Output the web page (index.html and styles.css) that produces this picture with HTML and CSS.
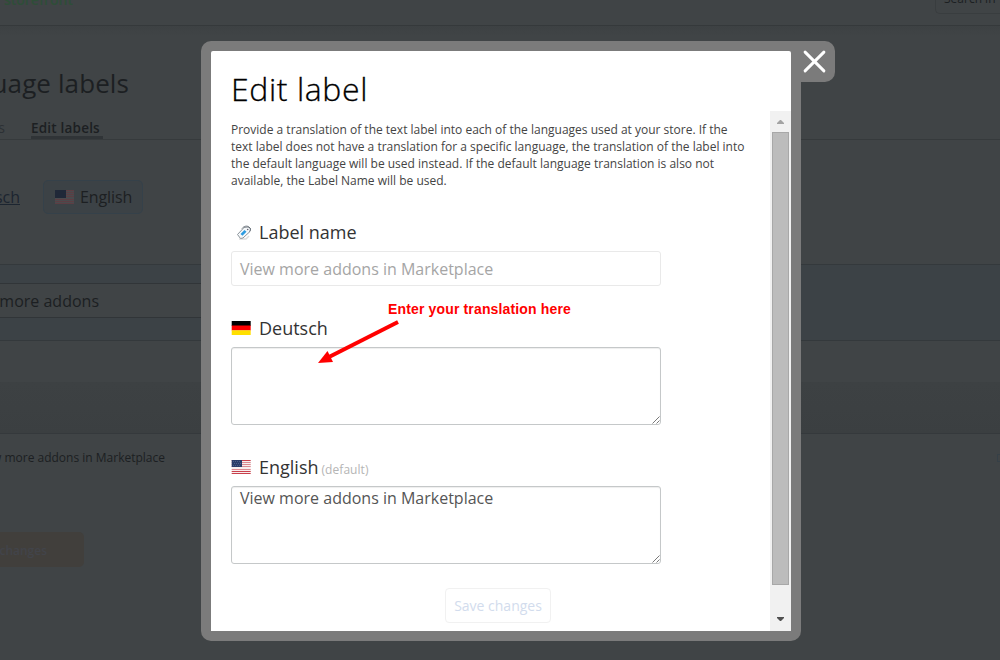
FILE: index.html
```html
<!DOCTYPE html>
<html lang="en">
<head>
<meta charset="utf-8">
<title>Language labels</title>
<link rel="stylesheet" href="styles.css">
</head>
<body>
<div class="page">
  <header class="topbar">
    <span class="clip store">storefront</span>
    <span class="search">Search in</span>
  </header>
  <section class="heading">
    <h1 class="clip title">Language labels</h1>
    <nav class="tabs"><span class="clip tab-prev">Languages</span><span class="tab-active">Edit labels</span></nav>
  </section>
  <section class="langs">
    <span class="clip lang-link">Deutsch</span>
    <span class="lang-current">
      <svg class="flag" viewBox="0 0 19 14"><path fill="#4b4a4d" d="M0 0h19v14H0z"/><path stroke="#5b3e44" d="M0 .5h19M0 2.500h19M0 4.500h19M0 6.500h19M0 9.500h19M0 11.500h19M0 13.500h19"/><path fill="#202838" d="M0 0h11v8H0z"/></svg>
      <span class="lang-name">English</span>
    </span>
  </section>
  <section class="filter"><div class="filter-input"><span class="clip filter-text">View more addons</span></div></section>
  <section class="gap"></section>
  <section class="thead"></section>
  <section class="results">
    <div class="row"><span class="clip row-text">View more addons in Marketplace</span><span class="row-box"></span></div>
    <div class="save-bg"><span class="clip save-bg-text">Save changes</span></div>
  </section>
</div>

<div class="modal">
  <div class="dialog">
    <h2 class="dialog-title">Edit label</h2>
    <div class="body">
      <div class="content">
        <p class="intro">Provide a translation of the text label into each of the languages used at your store. If the<br>text label does not have a translation for a specific language, the translation of the label into<br>the default language will be used instead. If the default language translation is also not<br>available, the Label Name will be used.</p>
        <div class="field">
          <div class="label">
            <svg class="icon" viewBox="0 0 20 18"><path d="M8 16h7l3-3" fill="none" stroke="#ddd" stroke-width="1.500"/><path d="M6.500 11.500 13 4.500l4-.5 2.500 1.500-.5 3-7 6.500-2.500.5z" fill="#f5f8fa" stroke="#8a9299"/><path d="m9.500 11 4-4 2 1.700-4 4z" fill="#2b9be0"/><path d="M11 5.500c2-2.500 5-3 7-1.500s2 3 .5 4.500" fill="none" stroke="#687078"/><circle cx="16.700" cy="6.500" r=".8" fill="#667"/></svg>
            <span class="label-text">Label name</span>
          </div>
          <div class="input">View more addons in Marketplace</div>
        </div>
        <div class="field second">
          <div class="label">
            <svg class="icon" viewBox="0 0 20 18"><path d="M.7 2h19v5H.7z"/><path fill="#f00" d="M.7 6.500h19v5H.7z"/><path fill="#ffe000" d="M.7 11.300h19V16H.7z"/></svg>
            <span class="label-text">Deutsch</span>
          </div>
          <div class="area"><svg class="grip" viewBox="0 0 8 8"><path d="m.5 7.500 7-7M4.500 7.500l3-3"/></svg></div>
        </div>
        <div class="field third">
          <div class="label">
            <svg class="icon" viewBox="0 0 20 18"><path fill="#f7eeee" d="M.7 2h19v14H.7z"/><path stroke="#c9404c" d="M.7 2.500h19M.7 15.500h19M.7 13.500h19"/><path stroke="#dc8a91" d="M.7 4.500h19M.7 6.500h19M.7 8.500h19M.7 11.500h19"/><path fill="#2b3d69" d="M.7 2h10.300v7H.7z"/><path stroke="#4d5d86" stroke-dasharray="1 1" d="M2 3.500h8M3 5.500h8M2 7.500h8"/></svg>
            <span class="label-text">English</span><span class="default">(default)</span>
          </div>
          <div class="area">View more addons in Marketplace<svg class="grip" viewBox="0 0 8 8"><path d="m.5 7.500 7-7M4.500 7.500l3-3"/></svg></div>
        </div>
        <div class="actions"><span class="save">Save changes</span></div>
      </div>
      <div class="scrollbar">
        <svg class="arrow" viewBox="0 0 21 21"><path fill="#a3a3a3" d="M7 13h7v-1L11 9h-1l-3 3z"/></svg>
        <div class="thumb"></div>
        <svg class="arrow down" viewBox="0 0 21 21"><path fill="#505050" d="M7 8h7v1l-3 3h-1L7 9z"/></svg>
      </div>
    </div>
  </div>
  <div class="close"><svg class="cross" viewBox="0 0 22 22"><path d="m2 2 18 18M20 2 2 20"/></svg></div>
  <div class="note">Enter your translation here</div>
  <svg class="pointer" viewBox="0 0 90 50"><path stroke="#f00" stroke-width="4" d="M83 6 14 41"/><path fill="#f00" d="m3 47 9.500-12 5.500 11z"/></svg>
</div>
</body>
</html>
```
FILE: styles.css
```css
* { box-sizing: border-box; }
body {
  margin: 0;
  width: 1000px;
  height: 660px;
  overflow: hidden;
  position: relative;
  background: #404446;
  font-family: "Open Sans", sans-serif;
  color: #1c1f22;
}
h1, h2, p { margin: 0; font-weight: 400; }
.page { height: 660px; display: flex; flex-direction: column; }
.clip { display: flex; justify-content: flex-end; overflow: hidden; white-space: nowrap; flex: none; }

.topbar { height: 26px; flex: none; display: flex; justify-content: space-between; border-bottom: 1px solid #35393b; overflow: hidden; }
.store { width: 73px; height: 20px; margin-top: -11px; font-size: 14px; line-height: 20px; font-weight: 600; color: #2e4e38; }
.search { width: 65px; height: 26px; margin-top: -12px; padding: 0 0 0 8px; border: 1px solid #393d3f; border-right: 0; border-radius: 5px 0 0 5px; font-size: 12px; line-height: 20px; white-space: nowrap; overflow: hidden; }
.topbar .store { height: 24px; line-height: 22px; }

.heading { height: 114px; flex: none; display: flex; flex-direction: column; padding-top: 37px; border-bottom: 1px solid #363a3c; background: linear-gradient(#3d4143, #404446 10px); }
.title { width: 129px; height: 42px; font-size: 26px; line-height: 40px; letter-spacing: .1px; }
.tabs { display: flex; gap: 26px; margin-top: 12px; height: 23px; font-size: 14px; line-height: 22px; }
.tab-prev { width: 5px; color: #2c3034; }
.tab-active { width: 72px; height: 22px; border-bottom: 3px solid #303437; white-space: nowrap; font-weight: 600; font-size: 13.500px; letter-spacing: .2px; }

.langs { height: 124px; flex: none; display: flex; gap: 23px; padding-top: 40px; }
.lang-link { width: 20px; height: 34px; line-height: 34px; font-size: 16px; color: #1c2530; text-decoration: underline; }
.lang-current { display: flex; align-items: center; width: 100px; height: 34px; padding-left: 11px; gap: 6px; border: 1px solid #35414a; border-radius: 5px; background: #3c4246; font-size: 16px; }
.lang-name { letter-spacing: -.1px; }
.flag { width: 19px; height: 14px; }

.filter { height: 77px; flex: none; padding: 18px 0; border: 1px solid #34393c; border-width: 1px 0; background: #3c4246; }
.filter-input { width: 760px; height: 35px; border: 1px solid #313538; border-width: 1px 0; background: #404446; }
.filter-text { width: 99px; font-size: 16px; line-height: 34px; }
.gap { height: 41px; flex: none; }
.thead { height: 52px; flex: none; border-bottom: 1px solid #35393c; background: linear-gradient(#3d4143, #3b3f41); }
.results { flex: 1; display: flex; flex-direction: column; }
.row { display: flex; justify-content: space-between; height: 98px; padding-top: 14px; }
.row-text { width: 165px; font-size: 12px; line-height: 20px; height: 20px; }
.row-box { width: 3px; height: 8px; margin-top: 6px; border: 1px solid #364047; border-right: 0; }
.save-bg { width: 84px; height: 35px; border-radius: 0 5px 5px 0; background: #413f3c; }
.save-bg-text { width: 47px; line-height: 37px; font-size: 12px; font-weight: 600; color: #42444a; }

.modal { position: absolute; left: 201px; top: 41px; width: 600px; height: 600px; padding: 10px; border-radius: 10px 0 10px 10px; background: #7b7b7b; }
.dialog { width: 580px; height: 580px; border-radius: 2px 2px 0 0; overflow: hidden; background: #fff; display: flex; flex-direction: column; }
.dialog-title { height: 60px; flex: none; padding: 16px 0 0 20px; font-size: 32px; line-height: 43px; font-weight: 300; letter-spacing: .6px; color: #000; -webkit-text-stroke: .3px #000; white-space: nowrap; }
.body { flex: 1; display: flex; min-height: 0; }
.content { width: 559px; padding: 10px 20px 0; display: flex; flex-direction: column; }
.intro { font-size: 12px; line-height: 17px; color: #444; white-space: nowrap; height: 68px; }
.field { margin-top: 29px; }
.second { margin-top: 28px; }
.third { margin-top: 28px; }
.label { display: flex; align-items: center; height: 28px; gap: 8px; font-size: 18px; line-height: 28px; color: #333; white-space: nowrap; }
.icon { width: 20px; height: 18px; flex: none; }
.default { margin: 6px 0 0 -5px; font-size: 12px; letter-spacing: .05px; line-height: 26px; color: #b5b5b5; }
.input { width: 430px; height: 35px; margin-top: 5px; padding-left: 8px; border: 1px solid #e9e9e9; border-radius: 3px; font-size: 16px; line-height: 34px; color: #a5a5a5; }
.area { position: relative; width: 430px; height: 78px; margin-top: 5px; padding-left: 8px; border: 1px solid #c5c8c9; border-radius: 3px; box-shadow: inset 0 1px 1px #eee; font-size: 16px; line-height: 22px; color: #555; }
.grip { position: absolute; right: 0; bottom: 0; width: 8px; height: 8px; fill: none; stroke: #555; stroke-width: .8; }
.actions { padding: 24px 0 0 214px; }
.save { display: block; width: 106px; height: 35px; border: 1px solid #f1f1f1; border-radius: 4px; font-size: 14px; line-height: 34px; text-align: center; color: #d2dced; white-space: nowrap; }

.scrollbar { width: 21px; display: flex; flex-direction: column; background: #f1f1f1; }
.arrow { width: 21px; height: 21px; flex: none; }
.thumb { width: 17px; height: 453px; margin-left: 2px; border: 1px solid #a8a8a8; background: #bcbcbc; }
.down { margin-top: 24px; }

.close { position: absolute; left: 600px; top: 0; width: 34px; height: 41px; border-radius: 0 10px 10px 0; background: #7b7b7b; }
.cross { position: absolute; left: 2px; top: 9px; width: 23px; height: 23px; fill: none; stroke: #fff; stroke-width: 2.800; stroke-linecap: round; }
.note { position: absolute; left: 187px; top: 258px; font: bold 14px/20px "Liberation Sans", Arial, sans-serif; letter-spacing: .15px; color: #f00; white-space: nowrap; }
.pointer { position: absolute; left: 114px; top: 275px; width: 90px; height: 50px; }
```
